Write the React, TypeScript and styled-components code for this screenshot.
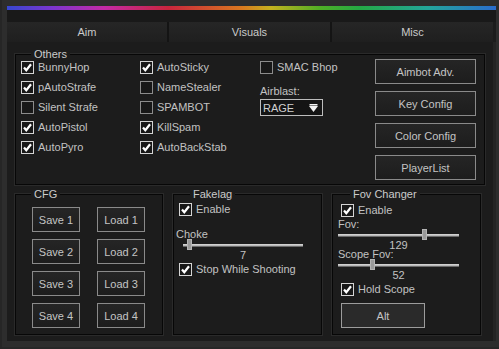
import { Fragment } from "react";
import styled, { createGlobalStyle } from "styled-components";

const GlobalStyle = createGlobalStyle`
	*, *::before, *::after {
		box-sizing: border-box;
	}

	html, body {
		margin: 0;
		padding: 0;
		background: #2b2b2b;
	}

	body {
		font-family: "Liberation Sans", Arial, sans-serif;
		font-size: 11px;
		color: #c2c2c2;
	}
`;

const Frame = styled.div`
	width: 499px;
	height: 349px;
	padding: 6px 6px 8px 7px;
	background: #2d2d2d;
	border-left: 2px solid #262626;
	border-bottom: 2px solid #272727;
	display: flex;
`;

const Window = styled.div`
	flex: 1;
	display: flex;
	flex-direction: column;
	background: #1c1c1c;
	margin-left: -2px;
	margin-bottom: -2px;
	padding-left: 2px;
`;

const Rainbow = styled.div`
	height: 4px;
	margin-left: -2px;
	background: linear-gradient(
		90deg,
		#3647cf 0%,
		#7a36cf 9%,
		#c42aa6 20%,
		#c9253d 33%,
		#d9781f 48%,
		#c4b21f 54%,
		#4fae25 64%,
		#24a844 72%,
		#23a59a 86%,
		#2a6ccd 100%
	);
`;

const TopStrip = styled.div`
	height: 12px;
	background: #191919;
	margin-left: -2px;
`;

const TabBar = styled.div`
	height: 20px;
	display: grid;
	grid-template-columns: 160px 161px 161px;
	gap: 2px;
	background: #141414;
	margin-left: -2px;
	margin-right: 3px;
`;

const Tab = styled.div`
	display: flex;
	align-items: center;
	justify-content: center;
	background: linear-gradient(#262626, #1f1f1f);
	color: #cacaca;
`;

const Content = styled.div`
	flex: 1;
	display: flex;
	flex-direction: column;
	padding: 12px 8px 0 6px;
	border-right: 3px solid #242424;
`;

const Group = styled.div<{ $w: number; $h: number }>`
	position: relative;
	width: ${(p) => p.$w}px;
	height: ${(p) => p.$h}px;
	border: 1px solid #070707;
	box-shadow: 0 0 0 1px #2a2a2a;
`;

const GroupTitle = styled.span<{ $left: number }>`
	position: absolute;
	top: -7px;
	left: ${(p) => p.$left}px;
	padding: 0 3px;
	line-height: 12px;
	background: #1c1c1c;
	color: #cbcbcb;
`;

const OthersBody = styled.div`
	display: flex;
	padding: 6px 0 0 5px;
`;

const Column = styled.div<{ $w: number }>`
	width: ${(p) => p.$w}px;
	display: flex;
	flex-direction: column;
	gap: 7px;
`;

const ButtonColumn = styled.div`
	display: flex;
	flex-direction: column;
	gap: 7px;
	margin-top: -2px;
`;

const Row = styled.label`
	display: flex;
	align-items: center;
	gap: 4px;
	height: 13px;
	line-height: 13px;
	white-space: nowrap;
`;

const Box = styled.span<{ $on: boolean }>`
	width: 13px;
	height: 13px;
	flex: none;
	display: flex;
	align-items: center;
	justify-content: center;
	border: 1px solid ${(p) => (p.$on ? "#d4d4d4" : "#8c8c8c")};
	background: #181818;
`;

const Caption = styled.div<{ $mt?: number; $ml?: number }>`
	height: 10px;
	line-height: 10px;
	margin-top: ${(p) => p.$mt ?? 0}px;
	margin-left: ${(p) => p.$ml ?? 0}px;
	white-space: nowrap;
`;

const Select = styled.div`
	width: 63px;
	height: 17px;
	margin-top: 3px;
	display: flex;
	align-items: center;
	justify-content: space-between;
	padding: 0 4px 0 2px;
	border: 1px solid #bdbdbd;
	background: #141414;
	color: #d0d0d0;
`;

const Button = styled.div<{ $w: number; $h: number; $light?: boolean }>`
	width: ${(p) => p.$w}px;
	height: ${(p) => p.$h}px;
	display: flex;
	align-items: center;
	justify-content: center;
	border: 1px solid ${(p) => (p.$light ? "#9c9c9c" : "#8a8a8a")};
	background: ${(p) => (p.$light ? "#2a2a2a" : "linear-gradient(#252525, #1d1d1d)")};
	color: #c4c4c4;
	white-space: nowrap;
`;

const BottomRow = styled.div`
	display: flex;
	gap: 10px;
	margin-top: 9px;
`;

const CfgGrid = styled.div`
	display: grid;
	grid-template-columns: 48px 48px;
	grid-auto-rows: 24px;
	column-gap: 17px;
	row-gap: 8px;
	padding: 12px 0 0 16px;
`;

const Stack = styled.div<{ $pt: number; $pl: number }>`
	display: flex;
	flex-direction: column;
	align-items: flex-start;
	padding: ${(p) => p.$pt}px 0 0 ${(p) => p.$pl}px;
`;

const Spaced = styled.div<{ $mt?: number; $ml?: number }>`
	margin-top: ${(p) => p.$mt ?? 0}px;
	margin-left: ${(p) => p.$ml ?? 0}px;
`;

const SliderWrap = styled.div<{ $w: number; $ml: number }>`
	position: relative;
	width: ${(p) => p.$w}px;
	height: 11px;
	margin-left: ${(p) => p.$ml}px;
`;

const Track = styled.div`
	position: absolute;
	left: 0;
	right: 0;
	top: 5px;
	height: 3px;
	background: #b9b9b9;
	border-top: 1px solid #d0d0d0;
	border-bottom: 1px solid #6a6a6a;
`;

const Thumb = styled.div`
	position: absolute;
	top: 0;
	width: 5px;
	height: 11px;
	background: #9a9a9a;
	border: 1px solid #b4b4b4;
`;

const Value = styled.div<{ $w: number; $ml: number }>`
	width: ${(p) => p.$w}px;
	margin-left: ${(p) => p.$ml}px;
	height: 10px;
	line-height: 10px;
	text-align: center;
`;

const Check = ({ label, on }: { label: string; on: boolean }) => (
	<Row>
		<Box $on={on}>
			{on && (
				<svg width="11" height="11" viewBox="0 0 11 11">
					<polyline
						points="2,5.5 4.3,8.3 9,2.3"
						fill="none"
						stroke="#ffffff"
						strokeWidth="2.2"
					/>
				</svg>
			)}
		</Box>
		{label}
	</Row>
);

const Slider = ({ w, ml, pos }: { w: number; ml: number; pos: number }) => (
	<SliderWrap
		$w={w}
		$ml={ml}
	>
		<Track />
		<Thumb style={{ left: Math.round(pos * (w - 5)) }} />
	</SliderWrap>
);

const App = () => {
	return (
		<>
			<GlobalStyle />
			<Frame>
				<Window>
					<Rainbow />
					<TopStrip />
					<TabBar>
						<Tab>Aim</Tab>
						<Tab>Visuals</Tab>
						<Tab>Misc</Tab>
					</TabBar>
					<Content>
						<Group
							$w={470}
							$h={131}
						>
							<GroupTitle $left={15}>Others</GroupTitle>
							<OthersBody>
								<Column $w={119}>
									<Check label="BunnyHop" on />
									<Check label="pAutoStrafe" on />
									<Check label="Silent Strafe" on={false} />
									<Check label="AutoPistol" on />
									<Check label="AutoPyro" on />
								</Column>
								<Column $w={120}>
									<Check label="AutoSticky" on />
									<Check label="NameStealer" on={false} />
									<Check label="SPAMBOT" on={false} />
									<Check label="KillSpam" on />
									<Check label="AutoBackStab" on />
								</Column>
								<Column $w={115}>
									<Check label="SMAC Bhop" on={false} />
									<div>
										<Caption $mt={5}>Airblast:</Caption>
										<Select>
											RAGE
											<svg width="9" height="8" viewBox="0 0 9 8">
												<rect x="0.5" y="0" width="8" height="1.5" fill="#f2f2f2" />
												<polygon points="0,2 9,2 4.5,8" fill="#f2f2f2" />
											</svg>
										</Select>
									</div>
								</Column>
								<ButtonColumn>
									<Button $w={101} $h={25}>Aimbot Adv.</Button>
									<Button $w={101} $h={25}>Key Config</Button>
									<Button $w={101} $h={25}>Color Config</Button>
									<Button $w={101} $h={25}>PlayerList</Button>
								</ButtonColumn>
							</OthersBody>
						</Group>
						<BottomRow>
							<Group
								$w={148}
								$h={141}
							>
								<GroupTitle $left={15}>CFG</GroupTitle>
								<CfgGrid>
									{[1, 2, 3, 4].map((n) => (
										<Fragment key={n}>
											<Button $w={48} $h={25}>Save {n}</Button>
											<Button $w={48} $h={25}>Load {n}</Button>
										</Fragment>
									))}
								</CfgGrid>
							</Group>
							<Group
								$w={149}
								$h={141}
							>
								<GroupTitle $left={16}>Fakelag</GroupTitle>
								<Stack
									$pt={8}
									$pl={5}
								>
									<Check label="Enable" on />
									<Caption $mt={13} $ml={-3}>Choke</Caption>
									<Slider w={120} ml={4} pos={0.035} />
									<Value $w={120} $ml={4}>7</Value>
									<Spaced $mt={3}>
										<Check label="Stop While Shooting" on />
									</Spaced>
								</Stack>
							</Group>
							<Group
								$w={149}
								$h={141}
							>
								<GroupTitle $left={17}>Fov Changer</GroupTitle>
								<Stack
									$pt={9}
									$pl={8}
								>
									<Check label="Enable" on />
									<Caption $mt={2} $ml={-3}>Fov:</Caption>
									<Slider w={121} ml={-3} pos={0.72} />
									<Value $w={121} $ml={-3}>129</Value>
									<Caption $mt={-1} $ml={-3}>Scope Fov:</Caption>
									<Slider w={121} ml={-3} pos={0.28} />
									<Value $w={121} $ml={-3}>52</Value>
									<Spaced $mt={3}>
										<Check label="Hold Scope" on />
									</Spaced>
									<Spaced $mt={7}>
										<Button $w={84} $h={25} $light>Alt</Button>
									</Spaced>
								</Stack>
							</Group>
						</BottomRow>
					</Content>
				</Window>
			</Frame>
		</>
	);
};

export default App;
